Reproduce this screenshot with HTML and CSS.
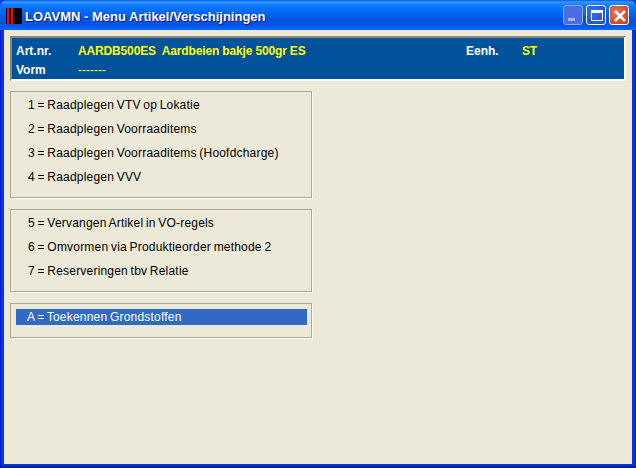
FILE: index.html
```html
<!DOCTYPE html>
<html lang="nl">
<head>
<meta charset="utf-8">
<title>LOAVMN</title>
<link rel="stylesheet" href="styles.css">
</head>
<body>
<div class="window">
  <div class="titlebar">
    <svg class="appicon" width="16" height="16" viewBox="0 0 16 16"><rect width="16" height="16" fill="#000"/><rect x="1" width="2" height="16" fill="#f00"/><rect x="5" width="2" height="16" fill="#f00"/></svg>
    <span class="title">LOAVMN - Menu Artikel/Verschijningen</span>
    <div class="controls">
      <div class="ctl ctl-min"><svg width="20" height="20" viewBox="0 0 20 20"><rect x="5" y="13" width="7" height="3" fill="#9fb0ea"/></svg></div>
      <div class="ctl ctl-max"><svg width="20" height="20" viewBox="0 0 20 20"><path d="M5.5 6.5h11v9h-11z" fill="none" stroke="#fff"/><rect x="5" y="5" width="12" height="3" fill="#fff"/></svg></div>
      <div class="ctl ctl-close"><svg width="20" height="20" viewBox="0 0 20 20"><path d="M6 6l10 10M16 6l-10 10" stroke="#fff" stroke-width="2.5" fill="none"/></svg></div>
    </div>
  </div>
  <div class="client">
    <div class="header">
      <div class="hrow">
        <span class="hlabel">Art.nr.</span>
        <span class="hvalue hmain">AARDB500ES&nbsp; Aardbeien bakje 500gr ES</span>
        <span class="hlabel hunit">Eenh.</span>
        <span class="hvalue">ST</span>
      </div>
      <div class="hrow">
        <span class="hlabel">Vorm</span>
        <span class="hdash">-------</span>
      </div>
    </div>
    <div class="group group-a">
      <div class="item">1 = Raadplegen VTV op Lokatie</div>
      <div class="item">2 = Raadplegen Voorraaditems</div>
      <div class="item">3 = Raadplegen Voorraaditems (Hoofdcharge)</div>
      <div class="item">4 = Raadplegen VVV</div>
    </div>
    <div class="group group-b">
      <div class="item">5 = Vervangen Artikel in VO-regels</div>
      <div class="item">6 = Omvormen via Produktieorder methode 2</div>
      <div class="item">7 = Reserveringen tbv Relatie</div>
    </div>
    <div class="group group-c">
      <div class="item item-active">A = Toekennen Grondstoffen</div>
    </div>
  </div>
</div>
</body>
</html>
```
FILE: styles.css
```css
html, body { margin: 0; padding: 0; }
body { width: 636px; height: 468px; overflow: hidden; background: #0a3bd6; font-family: "Liberation Sans", Arial, sans-serif; }
.window { width: 636px; height: 468px; box-sizing: border-box; display: flex; flex-direction: column; border-radius: 7px 7px 0 0; overflow: hidden; background: #0535e0; padding: 0 0 4px; box-shadow: inset 1px 0 0 #0019cf, inset -1px -2px 0 #001ea0; }
.titlebar { height: 30px; flex: none; box-sizing: border-box; display: flex; align-items: center; padding: 2px 7px 0 6px; background: linear-gradient(180deg, #0058ee 0%, #3a93ff 6%, #288eff 10%, #127dff 16%, #036ffc 30%, #0262ee 50%, #0057e5 60%, #0054e3 75%, #0055eb 88%, #005bf5 93%, #026afe 96%, #0062ef 100%); }
.appicon { flex: none; margin-right: 3px; }
.title { flex: 1; color: #fff; font-size: 13px; font-weight: bold; white-space: nowrap; text-shadow: 1px 1px 0 #0f1089; }
.controls { display: flex; gap: 3px; flex: none; margin-top: -2px; }
.ctl { width: 20px; height: 20px; box-sizing: border-box; border-radius: 3px; border: 1px solid #fff; overflow: hidden; display: flex; }
.ctl svg { margin: -1px; flex: none; }
.ctl-min { background: #4a6de0; border-color: #8ea5ec; }
.ctl-max { background: radial-gradient(circle at 35% 35%, #3b6fe6, #2248cf); }
.ctl-close { background: radial-gradient(circle at 35% 35%, #e8745a, #c13a17); }
.client { flex: 1; margin: 0 4px; background: #ece9d8; padding: 6px 6px 0; display: flex; flex-direction: column; align-items: flex-start; }
.header { width: 616px; height: 45px; box-sizing: border-box; background: #00529b; border: 2px solid #fff; border-top-color: #8a8778; border-left-color: #8a8778; color: #fff; font-size: 12px; font-weight: bold; padding: 3px 0 0 4px; margin-bottom: 10px; display: flex; flex-direction: column; }
.hrow { display: flex; height: 20px; align-items: center; white-space: nowrap; }
.hlabel { width: 62px; flex: none; }
.hvalue { color: #ff0; letter-spacing: -0.15px; }
.hmain { width: 388px; flex: none; }
.hunit { width: 56px; }
.hdash { color: #ff0; font-weight: normal; }
.group { width: 302px; box-sizing: border-box; border: 1px solid #aca899; box-shadow: 1px 1px 0 #fff; padding: 1px 5px; margin-bottom: 11px; font-size: 12px; color: #000; }
.group-a { height: 107px; }
.group-b { height: 83px; }
.group-c { height: 35px; padding-top: 5px; padding-right: 4px; }
.item { height: 24px; line-height: 24px; padding-left: 12px; white-space: nowrap; letter-spacing: 0.2px; word-spacing: -0.9px; }
.item-active { height: 16px; line-height: 16px; padding-left: 11px; background: #316ac5; color: #fff; }
```
